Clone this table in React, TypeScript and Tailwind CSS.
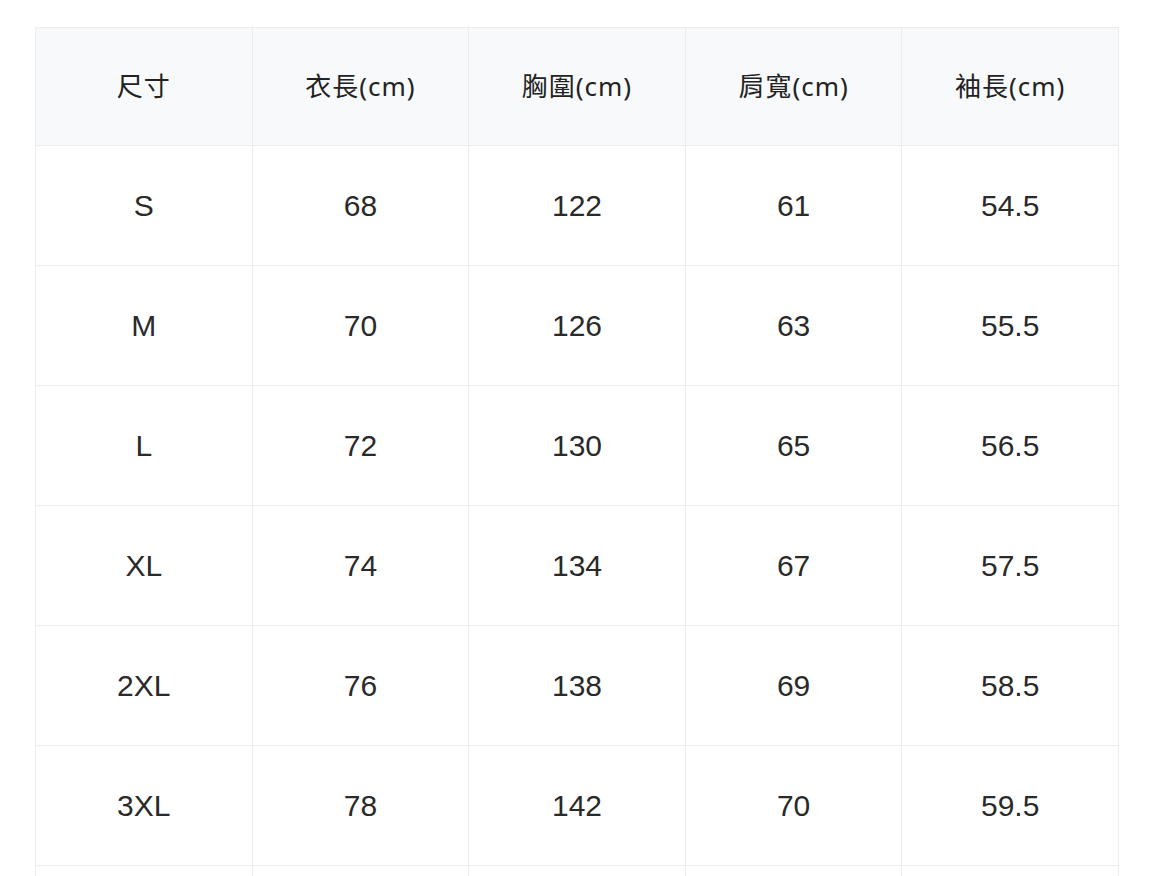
import React from 'react';

const headers = ['尺寸', '衣長(cm)', '胸圍(cm)', '肩寬(cm)', '袖長(cm)'];

const rows = [
  ['S', '68', '122', '61', '54.5'],
  ['M', '70', '126', '63', '55.5'],
  ['L', '72', '130', '65', '56.5'],
  ['XL', '74', '134', '67', '57.5'],
  ['2XL', '76', '138', '69', '58.5'],
  ['3XL', '78', '142', '70', '59.5'],
];

const App: React.FC = () => {
  return (
    <div className="min-h-screen bg-white pt-[27px] pl-[35px]">
      <table
        className="w-[1084px] table-fixed border-collapse text-[#262626]"
        style={{ fontFamily: '"Liberation Sans", "Noto Sans CJK TC", sans-serif' }}
      >
        <thead>
          <tr className="h-[118px] bg-[#f8f9fb]">
            {headers.map(h => (
              <th
                key={h}
                className="border border-[#ececec] text-center align-middle text-[26px] font-normal tracking-[1px] text-[#222]"
                style={{ fontFamily: '"Noto Sans", "Noto Sans CJK TC", sans-serif' }}
              >
                {h}
              </th>
            ))}
          </tr>
        </thead>
        <tbody>
          {rows.map(r => (
            <tr key={r[0]} className="h-[120px]">
              {r.map((c, i) => (
                <td
                  key={i}
                  className="border border-[#ececec] text-center align-middle text-[30px] text-[#2a2a2a]"
                >
                  {c}
                </td>
              ))}
            </tr>
          ))}
          {/* next row runs past the bottom of the view */}
          <tr className="h-[120px]">
            {headers.map(h => (
              <td key={h} className="border border-[#ececec]" />
            ))}
          </tr>
        </tbody>
      </table>
    </div>
  );
};

export default App;
